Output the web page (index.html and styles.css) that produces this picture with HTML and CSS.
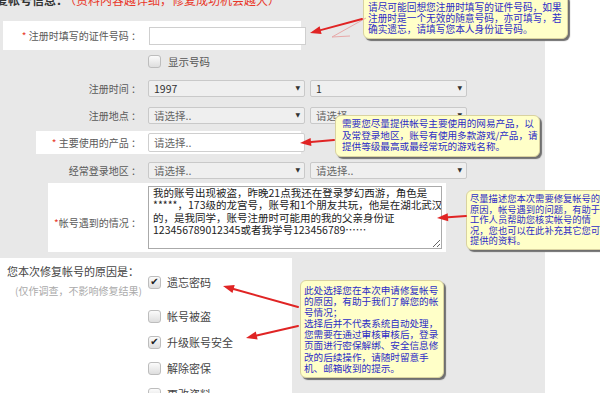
FILE: index.html
```html
<!DOCTYPE html>
<html lang="zh-CN">
<head>
<meta charset="utf-8">
<title>修复帐号信息</title>
<link rel="stylesheet" href="styles.css">
</head>
<body>
<div class="page">
  <div class="upper">
    <div class="head"><span class="head-t">修复帐号信息：</span><span class="head-note">（资料内容越详细，修复成功机会越大）</span></div>

    <div class="row hl hl1">
      <span class="lbl"><span class="req">*</span> 注册时填写的证件号码 ：</span>
      <input class="inp" type="text">
    </div>

    <div class="row chk-row">
      <span class="cb"></span><span class="cb-txt">显示号码</span>
    </div>

    <div class="row sel-row r-time">
      <span class="lbl">注册时间 ：</span>
      <div class="sel"><span class="val">1997</span><span class="arr">▼</span></div>
      <div class="sel sel2"><span class="val">1</span><span class="arr">▼</span></div>
    </div>

    <div class="row sel-row r-place">
      <span class="lbl">注册地点 ：</span>
      <div class="sel"><span class="val gray">请选择..</span><span class="arr">▼</span></div>
      <div class="sel sel2"><span class="val gray">请选择..</span><span class="arr">▼</span></div>
    </div>

    <div class="row hl hl2">
      <span class="lbl"><span class="req">*</span> 主要使用的产品 ：</span>
      <div class="sel white"><span class="val gray">请选择..</span></div>
    </div>

    <div class="row sel-row r-area">
      <span class="lbl">经常登录地区 ：</span>
      <div class="sel"><span class="val gray">请选择..</span><span class="arr">▼</span></div>
      <div class="sel sel2"><span class="val gray">请选择..</span><span class="arr">▼</span></div>
    </div>

    <div class="row hl hl3">
      <span class="lbl lbl-ta"><span class="req">*</span>帐号遇到的情况 ：</span>
      <textarea class="ta">我的账号出现被盗，昨晚21点我还在登录梦幻西游，角色是
*****，173级的龙宫号，账号和1个朋友共玩，他是在湖北武汉
的，是我同学，账号注册时可能用的我的父亲身份证
123456789012345或者我学号123456789……</textarea>
    </div>
  </div>

  <div class="lower">
    <div class="lower-main">
      <div class="reason">
        <div class="reason-t">您本次修复帐号的原因是：</div>
        <div class="reason-s">(仅作调查，不影响修复结果)</div>
      </div>
      <div class="opts">
        <div class="opt"><span class="cb on">✔</span><span>遗忘密码</span></div>
        <div class="opt opt2"><span class="cb"></span><span>帐号被盗</span></div>
        <div class="opt"><span class="cb on">✔</span><span>升级账号安全</span></div>
        <div class="opt"><span class="cb"></span><span>解除密保</span></div>
        <div class="opt"><span class="cb"></span><span>更改资料</span></div>
      </div>
    </div>
    <div class="lower-side"></div>
  </div>

  <div class="tip tip1">请尽可能回想您注册时填写的证件号码，如果<br>注册时是一个无效的随意号码，亦可填写，若<br>确实遗忘，请填写您本人身份证号码。</div>
  <div class="tip tip2">需要您尽量提供帐号主要使用的网易产品，以<br>及常登录地区，账号有使用多款游戏/产品，请<br>提供等级最高或最经常玩的游戏名称。</div>
  <div class="tip tip3">尽量描述您本次需要修复帐号的<br>原因，帐号遇到的问题，有助于<br>工作人员帮助您核实帐号的情<br>况，您也可以在此补充其它您可<br>提供的资料。</div>
  <div class="tip tip4">此处选择您在本次申请修复帐号<br>的原因，有助于我们了解您的帐<br>号情况；<br>选择后并不代表系统自动处理，<br>您需要在通过审核审核后，登录<br>页面进行密保解绑、安全信息修<br>改的后续操作，请随时留意手<br>机、邮箱收到的提示。</div>

  <svg class="arrows" width="600" height="393" viewBox="0 0 600 393">
    <polyline points="366,18 332,37 350,36" fill="none" stroke="#e7a8a8" stroke-width="1"/>
    <g stroke="#e02424" stroke-width="2" fill="#e02424" stroke-linecap="round">
      <line x1="362" y1="19" x2="320.6" y2="30.1"/>
      <polygon points="310,33 319.6,26.3 321.6,34" stroke="none"/>
      <line x1="334" y1="140" x2="311" y2="142"/>
      <polygon points="300,143 310.6,138 311.4,146" stroke="none"/>
      <line x1="466" y1="216" x2="448" y2="217.2"/>
      <polygon points="437,218 447.7,213.2 448.3,221.2" stroke="none"/>
      <line x1="298" y1="307" x2="233.6" y2="289"/>
      <polygon points="223,286 234.7,285.1 232.5,292.9" stroke="none"/>
      <line x1="298" y1="326" x2="256.7" y2="335.5"/>
      <polygon points="246,338 255.8,331.6 257.6,339.4" stroke="none"/>
    </g>
  </svg>
</div>
</body>
</html>
```

FILE: styles.css
```css
* { box-sizing: border-box; }
html, body { margin: 0; padding: 0; }
body {
  background: #fff;
  font-family: "Noto Sans CJK SC", "Noto Sans", sans-serif;
  color: #555;
}
.page {
  position: relative;
  width: 600px;
  height: 393px;
  overflow: hidden;
}
.upper {
  display: flow-root;
  width: 545px;
  background: #e8e8e8;
  padding-bottom: 6px;
}
.head {
  margin: -7px 0 0 -16px;
  height: 14px;
  line-height: 14px;
  font-size: 12px;
  white-space: nowrap;
}
.head-t { color: #333; font-weight: bold; }
.head-note { color: #e8382a; margin-left: 2px; }

.row { display: flex; align-items: center; }
.hl1 { margin-top: 14px; }
.lbl {
  flex: none;
  width: 141px;
  text-align: right;
  font-size: 10px;
  color: #5a5a5a;
  white-space: nowrap;
}
.req { color: #e8382a; }
.hl { background: #fff; }

.hl1 { margin-left: 3px; width: 298px; height: 29px; }
.hl1 .lbl { width: 138px; }
.inp {
  margin-left: 8px;
  width: 157px;
  height: 18px;
  border: 1px solid #cfcfcf;
  background: #fff;
  padding: 0;
  outline: none;
}

.chk-row { margin: 5px 0 0 148px; height: 13px; }
.cb {
  flex: none;
  display: inline-flex;
  align-items: center;
  justify-content: center;
  width: 13px;
  height: 13px;
  border: 1px solid #bdbdbd;
  border-radius: 3px;
  background: linear-gradient(#fbfbfb, #dedede);
  font-family: "DejaVu Sans", sans-serif;
  font-size: 10px;
  line-height: 1;
  color: #222;
}
.cb-txt { margin-left: 7px; font-size: 10.5px; color: #555; }

.sel-row { height: 17px; }
.r-time { margin-top: 12px; }
.r-place { margin-top: 10px; }
.r-area { margin-top: 8px; }
.sel {
  position: relative;
  flex: none;
  margin-left: 7px;
  width: 157px;
  height: 17px;
  border: 1px solid #c9c9c9;
  border-radius: 2px;
  background: #efefef;
  display: flex;
  align-items: center;
  padding-left: 5px;
}
.sel2 { margin-left: 5px; }
.sel.white { background: #fff; height: 19px; border-color: #cfcfcf; }
.val { font-size: 10.5px; color: #333; }
.val.gray { color: #666; }
.arr {
  position: absolute;
  right: 4px;
  top: 4px;
  font-size: 6px;
  line-height: 1;
  color: #333;
  font-family: "DejaVu Sans", sans-serif;
}

.hl2 { margin: 7px 0 0 36px; width: 265px; height: 23px; }
.hl2 .lbl { width: 105px; }

.hl3 { margin: 4px 0 0 48px; width: 398px; height: 69px; }
.hl3 .lbl { width: 93px; }
.lbl-ta { margin-top: 10px; }
.ta {
  margin-left: 7px;
  width: 294px;
  height: 63px;
  border: 1px solid #aaa;
  padding: 0 4px;
  font-family: "Noto Sans CJK SC", sans-serif;
  font-size: 10.5px;
  line-height: 12.4px;
  color: #222;
  white-space: pre;
  overflow: hidden;
  background: #fff;
}

.lower { display: flex; height: 140px; }
.lower-main { width: 292px; background: #fff; display: flex; }
.lower-side { width: 253px; background: #e8e8e8; }
.reason { width: 148px; padding: 6px 0 0 7px; flex: none; }
.reason-t { font-size: 11px; line-height: 14px; color: #444; white-space: nowrap; }
.reason-s { margin: 7px 0 0 8px; font-size: 10px; line-height: 12px; color: #aaa; white-space: nowrap; }
.opts { padding-top: 16px; }
.opt {
  display: flex;
  align-items: center;
  height: 16px;
  font-size: 11px;
  color: #444;
}
.opt + .opt { margin-top: 10px; }
.opt + .opt2 { margin-top: 18px; }
.opt .cb { margin-right: 6px; }

.tip {
  position: absolute;
  background: #ffffc8;
  border: 1px solid #d9d2a0;
  border-radius: 6px;
  box-shadow: 2px 2px 1px #6f6f6f;
  color: #2d2dc6;
  white-space: nowrap;
  overflow: hidden;
}
.tip1 { left: 363px; top: -6px; width: 205px; height: 45px; padding: 7px 0 0 4px; font-size: 9.7px; line-height: 11px; }
.tip2 { left: 335px; top: 115px; width: 205px; height: 42px; padding: 2px 0 0 6px; font-size: 9.6px; line-height: 11.5px; }
.tip3 { left: 466px; top: 190px; width: 150px; height: 60px; padding: 2px 0 0 3px; font-size: 9.3px; line-height: 10.5px; }
.tip4 { left: 300px; top: 280px; width: 144px; height: 98px; padding: 4px 0 0 3px; font-size: 9.6px; line-height: 11.1px; }

.arrows { position: absolute; left: 0; top: 0; pointer-events: none; }
```
